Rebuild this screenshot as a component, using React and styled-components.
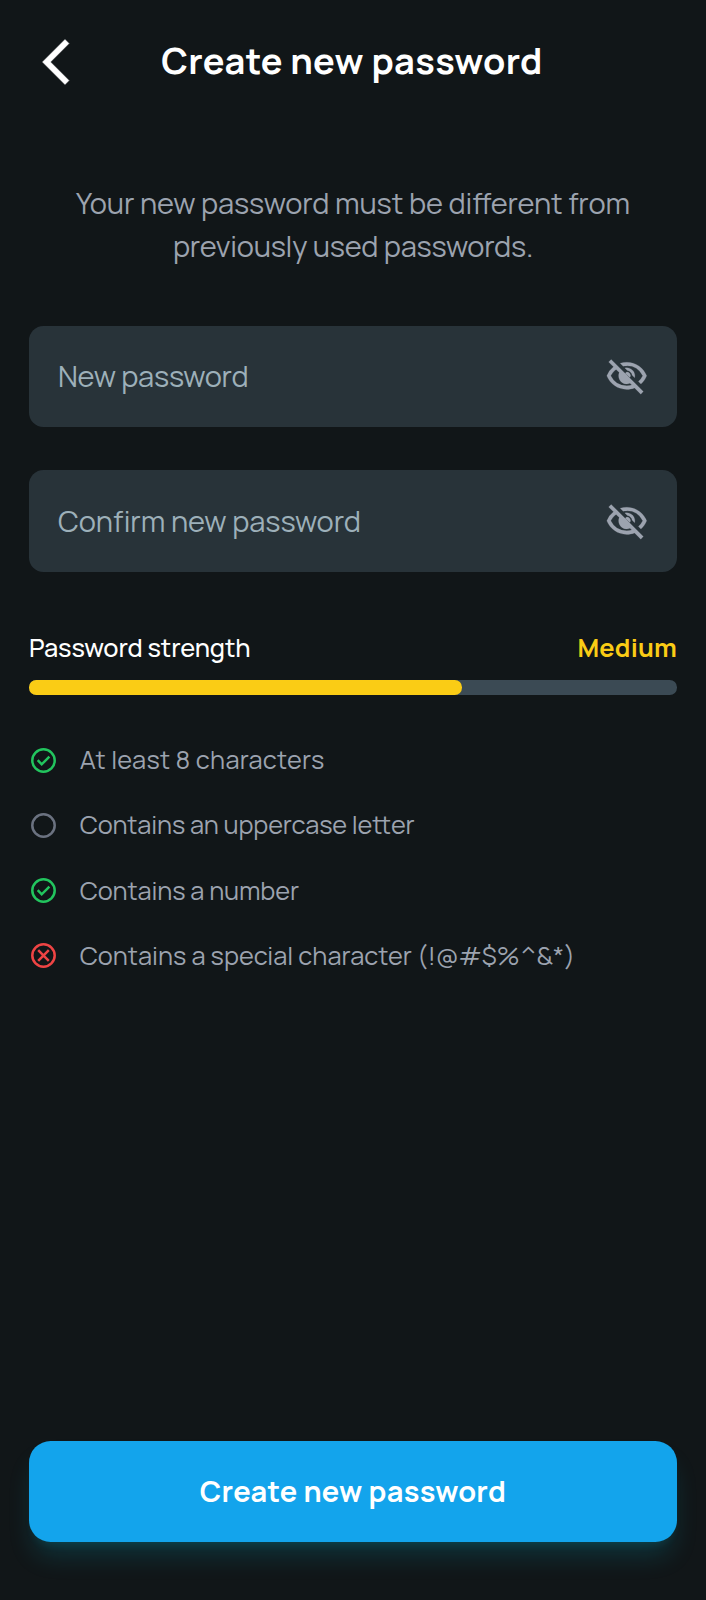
import React from "react";
import styled, { createGlobalStyle } from "styled-components";

const GlobalStyle = createGlobalStyle`
  *, *::before, *::after { box-sizing: border-box; }
  body {
    margin: 0;
    background: #111618;
    color: #fff;
    font-family: Manrope, Inter, "Liberation Sans", sans-serif;
    font-feature-settings: "liga" 1;
  }
`;

const Screen = styled.div`
  display: flex;
  flex-direction: column;
  min-height: 1600px;
  padding: 0 29px;
`;

const Header = styled.header`
  display: grid;
  grid-template-columns: 54px 1fr 54px;
  align-items: center;
  height: 123px;
`;

const BackButton = styled.button`
  display: flex;
  align-items: center;
  justify-content: center;
  width: 54px;
  height: 54px;
  padding: 0;
  border: 0;
  background: none;
  color: #fff;
`;

const Title = styled.h1`
  margin: 0;
  padding: 0 2px 2px 0;
  font-size: 36.2px;
  line-height: 45px;
  font-weight: 700;
  letter-spacing: 0.34px;
  text-align: center;
`;

const Intro = styled.p`
  margin: 58.5px 0 0;
  font-size: 29px;
  line-height: 43.5px;
  text-align: center;
  color: #9ca3af;
`;

const IntroLine = styled.span`
  display: block;
  letter-spacing: ${(p) => p.$tracking}px;
`;

const Fields = styled.div`
  display: flex;
  flex-direction: column;
  gap: 43.5px;
  margin-top: 57px;
`;

const Field = styled.label`
  display: flex;
  align-items: center;
  height: 101.4px;
  padding: 0 29px;
  border-radius: 14.5px;
  background: #283339;
`;

const FieldInput = styled.input`
  flex: 1;
  min-width: 0;
  padding: 0;
  border: 0;
  outline: 0;
  background: none;
  color: #fff;
  font: inherit;
  font-size: 29px;
  letter-spacing: ${(p) => p.$tracking}px;
  &::placeholder { color: #9db0b9; opacity: 1; }
`;

const EyeIcon = styled.svg`
  flex: none;
  width: 43.5px;
  height: 43.5px;
  margin: 2px 0 0;
  fill: #9ca3af;
  stroke: #9ca3af;
  stroke-width: 0.1;
`;

const Strength = styled.section`
  display: flex;
  flex-direction: column;
  gap: 14.5px;
  margin-top: 58px;
`;

const StrengthHead = styled.div`
  display: flex;
  justify-content: space-between;
  font-size: 25.35px;
  line-height: 36px;
  font-weight: 500;
  letter-spacing: -0.13px;
`;

const Level = styled.span`
  font-weight: 700;
  letter-spacing: 0.2px;
  color: #facc15;
`;

const Track = styled.div`
  height: 14.5px;
  border-radius: 7.25px;
  background: #3b4a54;
`;

const Fill = styled.div`
  width: 66.8%;
  height: 100%;
  border-radius: inherit;
  background: #facc15;
`;

const Rules = styled.ul`
  display: flex;
  flex-direction: column;
  gap: 21.7px;
  margin: 43.5px 0 0;
  padding: 0;
  list-style: none;
`;

const Rule = styled.li`
  display: flex;
  align-items: center;
  gap: 21.7px;
  height: 43.5px;
  font-size: 25.35px;
  letter-spacing: ${(p) => p.$tracking}px;
  color: #9ca3af;
`;

const RuleText = styled.span`
  padding-bottom: 0.5px;
`;

const tones = { passed: "#22c55e", pending: "#6b7280", failed: "#ef4444" };

const RuleIcon = styled.svg`
  flex: none;
  width: 29px;
  height: 29px;
  fill: none;
  stroke: ${(p) => tones[p.$state]};
  stroke-width: 2.5;
`;

const Submit = styled.button`
  height: 101.4px;
  margin: auto 0 58px;
  padding: 0;
  border: 0;
  border-radius: 21.7px;
  background: #13a4ec;
  box-shadow: 0 18px 27px -5.4px rgba(6, 182, 212, 0.2),
    0 7.2px 11px -7.2px rgba(6, 182, 212, 0.2);
  color: #fff;
  font: inherit;
  font-size: 29px;
  font-weight: 700;
  letter-spacing: 0.3px;
`;

const marks = {
  passed: "M8.7 14.2l4 4.1 7.7-7.7",
  failed: "M9.2 9.2l10.6 10.6M19.8 9.2L9.2 19.8",
};

const fields = [
  { label: "New password", tracking: -0.27 },
  { label: "Confirm new password", tracking: -0.08 },
];

const rules = [
  { state: "passed", text: "At least 8 characters", tracking: 0.23 },
  { state: "pending", text: "Contains an uppercase letter", tracking: -0.17 },
  { state: "passed", text: "Contains a number", tracking: -0.13 },
  { state: "failed", text: "Contains a special character (!@#$%^&*)", tracking: 0 },
];

export default function App() {
  return (
    <>
      <GlobalStyle />
      <Screen>
        <Header>
          <BackButton aria-label="Back">
            <svg width="54" height="54" viewBox="0 0 24 24" fill="currentColor" stroke="currentColor" strokeWidth=".2">
              <path d="M17.77 3.77 16 2 6 12l10 10 1.77-1.77L9.54 12z" />
            </svg>
          </BackButton>
          <Title>Create new password</Title>
        </Header>
        <Intro>
          <IntroLine $tracking={-0.12}>Your new password must be different from </IntroLine>
          <IntroLine $tracking={-0.26}>previously used passwords.</IntroLine>
        </Intro>
        <Fields>
          {fields.map(({ label, tracking }) => (
            <Field key={label}>
              <FieldInput type="password" placeholder={label} $tracking={tracking} />
              <EyeIcon viewBox="0 0 24 24">
                <path d="M12 6a9.77 9.77 0 0 1 8.82 5.5 9.647 9.647 0 0 1-2.41 3.12l1.41 1.41c1.39-1.23 2.49-2.77 3.18-4.53C21.27 7.11 17 4 12 4c-1.27 0-2.49.2-3.64.57l1.65 1.65C10.66 6.09 11.32 6 12 6zm-1.07 1.14L12.3 8.5c1.4.2 2.5 1.3 2.7 2.7l1.35 1.36c.08-.34.14-.7.14-1.07C16.5 9.01 14.48 7 12 7c-.37 0-.72.05-1.07.14zM2.01 3.87l2.68 2.68A11.738 11.738 0 0 0 1 11.5C2.73 15.89 7 19 12 19c1.52 0 2.98-.29 4.32-.82l3.42 3.42 1.41-1.41L3.42 2.45 2.01 3.87zm4.1 4.1 1.75 1.75a4.6 4.6 0 0 0-.36 1.78 4.507 4.507 0 0 0 6.27 4.14l.98.98c-.88.24-1.78.38-2.74.38a9.77 9.77 0 0 1-8.82-5.5c.7-1.43 1.72-2.61 2.92-3.53z" />
                <path d="M11.2 10.2c.2-.5.6-.8 1-.8 1 .1 1.8.9 1.9 1.9 0 .4-.1.8-.4 1.1z" />
              </EyeIcon>
            </Field>
          ))}
        </Fields>
        <Strength>
          <StrengthHead>
            <span>Password strength</span>
            <Level>Medium</Level>
          </StrengthHead>
          <Track>
            <Fill />
          </Track>
        </Strength>
        <Rules>
          {rules.map(({ state, text, tracking }) => (
            <Rule key={text} $tracking={tracking}>
              <RuleIcon viewBox="0 0 29 29" $state={state}>
                <circle cx="14.5" cy="14.5" r="11.2" />
                {marks[state] && <path d={marks[state]} />}
              </RuleIcon>
              <RuleText>{text}</RuleText>
            </Rule>
          ))}
        </Rules>
        <Submit>Create new password</Submit>
      </Screen>
    </>
  );
}
